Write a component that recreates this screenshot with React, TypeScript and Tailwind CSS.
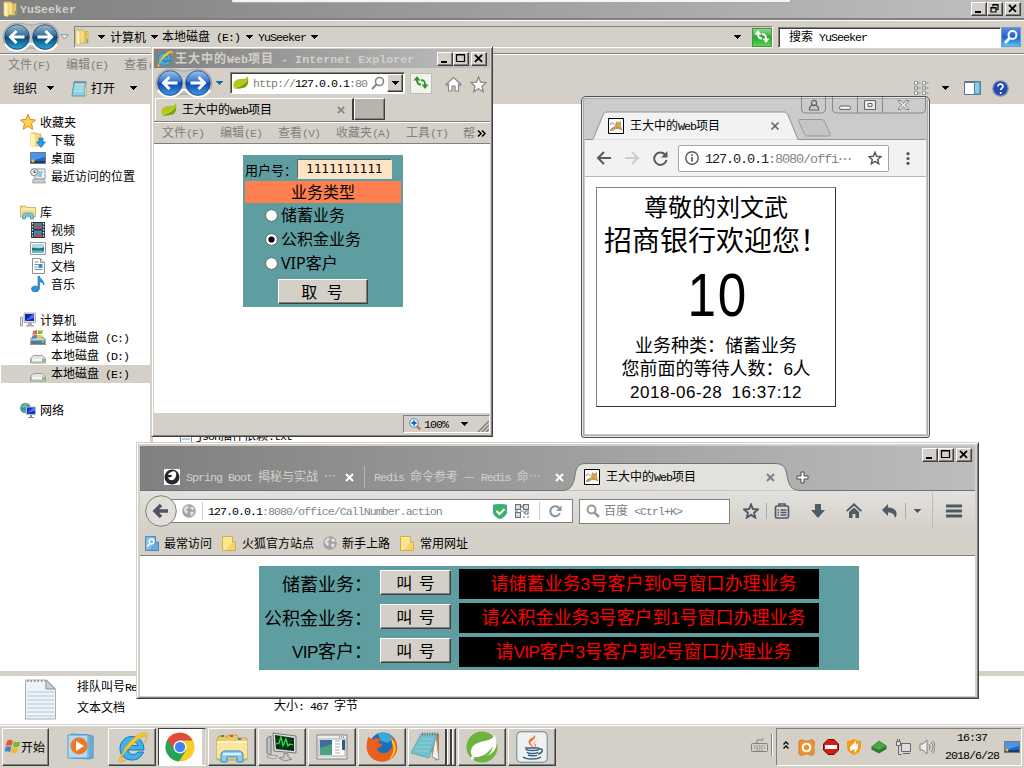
import React from "react";

type IconProps = { className?: string };

/* Text whose Latin letters take half the width of a Chinese character. */
function T({ children, className = "", variant = "song" }: { children: string; className?: string; variant?: "song" | "bold" | "hei" }) {
  const latin =
    variant === "hei"
      ? "font-['Liberation_Sans'] text-[0.95em] tracking-[-0.03em]"
      : variant === "bold"
        ? "font-['Liberation_Mono'] text-[0.96em] tracking-[0.009em]"
        : "font-['Liberation_Mono'] text-[0.97em] tracking-[-0.0845em]";
  const parts = children.split(/([\x20-\x7e]+)/).filter(Boolean);
  return (
    <span className={`shrink-0 whitespace-pre leading-none ${variant === "bold" ? "font-bold tracking-[1px]" : ""} ${className}`}>
      {parts.map((p, i) => (/^[\x20-\x7e]/.test(p) ? <span key={i} className={latin}>{p}</span> : p))}
    </span>
  );
}

const raised = "border border-t-white border-l-white border-r-[#404040] border-b-[#404040] shadow-[inset_-1px_-1px_0_#808080]";
const sunken = "border border-t-[#808080] border-l-[#808080] border-r-white border-b-white";

const Caret = ({ className = "" }: IconProps) => (
  <svg className={`h-[4px] w-[7px] shrink-0 ${className}`} viewBox="0 0 7 4" shapeRendering="crispEdges"><path d="M0 0h7L3.5 4z" fill="currentColor" /></svg>
);

function WinButton({ kind, className = "" }: { kind: "min" | "max" | "restore" | "close"; className?: string }) {
  return (
    <span className={`flex h-[14px] w-[16px] shrink-0 bg-[#d4d0c8] ${raised} ${className}`}>
      <svg className="h-[12px] w-[14px]" viewBox="0 0 14 12" fill="none" stroke="#000">
        {kind === "min" && <path d="M3 9h6" strokeWidth="2" />}
        {kind === "max" && <path d="M2.5 1.5h8v7h-8zM2 2h9" strokeWidth="1.2" />}
        {kind === "restore" && <path d="M5 3.5V1.5h5v5H8M3 4.5h5v4.5H3zM3 5h5M5 1.8h5" strokeWidth="1.2" />}
        {kind === "close" && <path d="M3 1.8l7 7M10 1.8l-7 7" strokeWidth="1.8" />}
      </svg>
    </span>
  );
}

function NavPair({ light }: { light?: boolean }) {
  const id = light ? "navIe" : "navEx";
  return (
    <svg className="h-[30px] w-[58px] shrink-0" viewBox="0 0 58 30">
      <defs>
        <linearGradient id={id} x1="0" y1="0" x2="0" y2="1">
          <stop offset="0" stopColor={light ? "#9cc3ec" : "#9db9cc"} />
          <stop offset=".42" stopColor={light ? "#3c78cf" : "#3a749c"} />
          <stop offset=".52" stopColor={light ? "#1046ad" : "#0c4674"} />
          <stop offset="1" stopColor={light ? "#3f9cf0" : "#27a9dc"} />
        </linearGradient>
      </defs>
      <path d="M15 1C22 1 24 3 29 3S36 1 43 1a14 14 0 0 1 0 28c-7 0-9-3-14-3s-7 3-14 3A14 14 0 0 1 15 1z" fill="#c3c4c6" stroke="#98999a" strokeWidth=".8" />
      <path d="M3 22a14 14 0 0 0 24 0 6 6 0 0 1 4 0 14 14 0 0 0 24 0" fill="none" stroke="#fff" strokeWidth="2" />
      <circle cx="15" cy="15" r="12.3" fill={`url(#${id})`} stroke="#1a3f66" strokeWidth=".8" />
      <circle cx="43" cy="15" r="12.3" fill={`url(#${id})`} stroke="#1a3f66" strokeWidth=".8" />
      <path d="M22.5 15H9M14.5 9L8.5 15l6 6M35.500 15H49M43.500 9l6 6-6 6" fill="none" stroke="#fff" strokeWidth="3" />
    </svg>
  );
}

const Folder = ({ className = "" }: IconProps) => (
  <svg className={`h-4 w-4 shrink-0 ${className}`} viewBox="0 0 16 16">
    <path d="M1 1h7l1 1.500h4V14H1z" fill="#f5dc86" stroke="#d1aa45" strokeWidth=".8" />
    <path d="M1 1l4 1.500V16L1 14.500z" fill="#fff1b5" stroke="#d9b654" strokeWidth=".6" />
    <path d="M9 3h3v11H9z" fill="#e5bd55" /><path d="M12.500 10v4" stroke="#45a5d4" />
  </svg>
);

const Leaf = () => (
  <svg className="h-4 w-4 shrink-0" viewBox="0 0 16 16">
    <path d="M1 13C-1 8 2 4 8 4c4 0 6-1 7-3 1 6-1 11-6 12-3 .8-6 .8-8 0z" fill="#b6c51c" />
    <path d="M1 13c3-1 9-2 14-9 1 6-2 9-6 9-3 .8-6 .8-8 0z" fill="#73a70e" />
    <path d="M1 13c5-2 10-3 13-8" stroke="#e4e76e" strokeWidth=".7" fill="none" />
  </svg>
);

const IELogo = ({ className = "" }: IconProps) => (
  <svg className={`shrink-0 ${className}`} viewBox="0 0 32 32">
    <path d="M28 19H12c.5 5 7 6 10 2h5.500C25 27 21 29 16 29 8.500 29 4 24 4 17.500S9 5.500 16 5.500s12 5 12 13.500zM12 14.500h10c-.5-4.500-9-5-10 0z" fill="#3eb2ea" stroke="#1472bd" strokeWidth="1" />
    <path d="M6 23C0 32 3 33 10 29c-8 2-4-6 5-14C23 7 29 3 30 6c.5 1.300-.3 4-1.500 6C33 5 32 1 27 2c-7 1-17 11-21 21z" fill="#f8c72c" stroke="#d99b12" strokeWidth=".5" />
  </svg>
);

const Globe = () => (
  <svg className="h-[14px] w-[14px] shrink-0" viewBox="0 0 14 14">
    <circle cx="7" cy="7" r="6.800" fill="#a2a2a2" />
    <path d="M2 4l3-2.500 2 1-1 2-2 1 2 2-1 3-2-2-1.500-2zM8 3l3-.5 1.500 3-2 .5-2-1zM8 8l3-.5 1 1.500-2 3-1.500-1z" fill="#e0ded9" />
  </svg>
);

const TomcatIcon = () => (
  <svg className="h-4 w-4 shrink-0" viewBox="0 0 16 16">
    <path d="M.5.5h15v15H.5z" fill="#fff" stroke="#000" strokeWidth="1" />
    <path d="M2 12.500c2-1 3-3 5.500-4.500l.8-4.500 1.700 1.500 2.500-1.500v4l1.300 4.500-2.300-1-1.500-1-3 1-2 1.500z" fill="#d5a64a" stroke="#876328" strokeWidth=".4" />
    <path d="M2.500 7c0-3 2.500-3 4 0" fill="none" stroke="#888" /><path d="M2.500 11.500l3-2M9 9.500l1.500 1.500" stroke="#555" strokeWidth=".7" />
  </svg>
);

function Arrows({ fill }: { fill: string }) {
  return (
    <svg className="h-[16px] w-[18px]" viewBox="0 0 18 16">
      <path d="M9 9.500C5.800 9.500 5 8 5 5M9 5c3.200 0 4 1.500 4 5" fill="none" stroke={fill} strokeWidth="2" />
      <path d="M5 1L1.500 5.500h7zM13 14l-3.500-4.500h7z" fill={fill} />
    </svg>
  );
}

/* ---------- Sidebar ---------- */
function SideIcon({ name }: { name: string }) {
  return (
    <svg className="h-4 w-4 shrink-0" viewBox="0 0 16 16">
      {name === "star" && <path d="M8 .5l2.200 5 5.300.5-4 3.600 1.200 5.600L8 12.300l-4.700 2.900 1.200-5.600L.5 6l5.300-.5z" fill="#ffd24d" stroke="#df7d22" />}
      {name === "download" && (<><path d="M1 1h6l1 1h3v12H1z" fill="#f3d87f" stroke="#cfa84a" strokeWidth=".7" /><path d="M1 1l4 1.500V15l-4-1z" fill="#fff0b3" /><path d="M9 6h4v4h2.500L11 15.500 6.500 10H9z" fill="#289ae4" stroke="#146bb2" strokeWidth=".7" /></>)}
      {name === "desktop" && (<><path d="M.5 2.500h15v11H.5z" fill="#2364c9" stroke="#777" /><path d="M1 3h14v4L1 11z" fill="#4b94e6" /><path d="M1 11h14v2H1z" fill="#173c68" /><circle cx="3" cy="11" r="1.500" fill="#f5c52a" /></>)}
      {name === "recent" && (<><path d="M5 1h10v10H5z" fill="#eef3f7" stroke="#8796a3" /><path d="M3 11h11l1.500 4h-13z" fill="#ccc" stroke="#888" strokeWidth=".6" /><circle cx="4.200" cy="4.200" r="3.600" fill="#e4e9ed" stroke="#888" /><path d="M4.200 2v2.500H6" stroke="#456" fill="none" /><path d="M8 4h5M8 6h4M7 8h5" stroke="#4b9bca" /></>)}
      {name === "library" && (<><path d="M.5 2h5l1 1.500h9V13H.5z" fill="#f6df8b" stroke="#cba64b" strokeWidth=".8" /><path d="M1 5h14" stroke="#fff6c7" /><path d="M2.500 15v-3c0-2 1-3 3-3h5c2 0 3 1 3 3v3h-3v-3h-5v3z" fill="#7cc8ef" stroke="#3989b8" strokeWidth=".7" /></>)}
      {name === "video" && (<><path d="M1 0h14v16H1z" fill="#263c3f" /><path d="M4 1h8v6H4zM4 8.500h8V15H4z" fill="#3585ce" /><path d="M4 1l4 3 4-3v1.500L9.500 5l2.500 2H4l3-2-3-2.500zM4 15l3-4 2 2 3-3v5z" fill="#b64c34" /><path d="M2.500 1v14M13.500 1v14" stroke="#dfeeee" strokeWidth="1.200" strokeDasharray="1.500 1.500" /></>)}
      {name === "image" && (<><path d="M.5 2.500h15v12H.5z" fill="#fff" stroke="#929aa0" /><path d="M2 4h12v9H2z" fill="#a8daf0" /><path d="M2 8c4-1 6 2 12-1v4H2z" fill="#247a54" /><path d="M2 10.500h12V13H2z" fill="#64b8dd" /></>)}
      {name === "doc" && (<><path d="M2.500.5h8l4 4v11h-12z" fill="#fff" stroke="#8b9297" /><path d="M10.500.5v4h4" fill="#ddd" stroke="#8b9297" /><path d="M4.500 4h4M4.500 6.500h4M4.500 9h3M4.500 11.500h8" stroke="#6c91ae" /><path d="M8.500 6h4v4h-4z" fill="#3b87c3" /></>)}
      {name === "music" && <path d="M8 0h1.500c0 3 5 4 4.500 9-1-3-3-3-4.500-3v6c0 5-8 5-8 1 0-3 4-4 6.500-2z" fill="#2b93dc" stroke="#1b6cad" strokeWidth=".6" />}
      {name === "computer" && (<><path d="M4 1h11.500v9.500H4z" fill="#dadbdd" stroke="#999" strokeWidth=".7" /><path d="M5 2h9v7H5z" fill="#1722b8" /><path d="M5 9l8-7h1v4z" fill="#466ee7" /><path d="M8 11h4v2h2v1.500H6V13h2z" fill="#aaa" /><path d="M.5 5h2v9h-2z" fill="#ddd" stroke="#888" strokeWidth=".7" /></>)}
      {name === "windrive" && (<><path d="M0 10l2-3h11l3 3v4.500H0z" fill="#c4ccd0" stroke="#66757e" strokeWidth=".7" /><path d="M1 10.500h14V14H1z" fill="#527d8c" /><path d="M12 11h2v2h-2z" fill="#47e14a" /><path d="M3 1l4-1v4L2.500 5z" fill="#ef6834" /><path d="M8 0c1 1 3 1 5 0l-1 4H7.500z" fill="#7dbc3a" /><path d="M2.500 5.500L7 4.500v3.500l-5 1z" fill="#438ccc" /><path d="M7.500 5H12l-1 3H7z" fill="#f6c52d" /></>)}
      {name === "drive" && (<><path d="M.5 10.500l3-3h9l3 3v4.500H.5z" fill="#e5e5e5" stroke="#888" strokeWidth=".8" /><path d="M1 10.500h14v4H1z" fill="#b4b4b4" /><path d="M2 10.500h10v3H2z" fill="#f6f6f6" /><path d="M12.500 11h1.500v2.500h-1.500z" fill="#4bdc48" /></>)}
      {name === "network" && (<><circle cx="5.500" cy="6" r="5.300" fill="#318bd1" /><path d="M1 5l4-4 3 1-2 3-3 1zM3 8l3 1-1 2-2-1z" fill="#77bf4b" /><path d="M6.500 5h9v7.500h-9z" fill="#1930c0" stroke="#b5c4d3" /><path d="M7 11l7-5.500h1v3z" fill="#5284ec" /><path d="M10 13h2v2h2v1H8v-1h2z" fill="#888" /></>)}
    </svg>
  );
}

type Row = { label: string; icon: string; root?: boolean; selected?: boolean; gap?: boolean };
const rows: Row[] = [
  { label: "收藏夹", icon: "star", root: true },
  { label: "下载", icon: "download" },
  { label: "桌面", icon: "desktop" },
  { label: "最近访问的位置", icon: "recent" },
  { label: "库", icon: "library", root: true, gap: true },
  { label: "视频", icon: "video" },
  { label: "图片", icon: "image" },
  { label: "文档", icon: "doc" },
  { label: "音乐", icon: "music" },
  { label: "计算机", icon: "computer", root: true, gap: true },
  { label: "本地磁盘 (C:)", icon: "windrive" },
  { label: "本地磁盘 (D:)", icon: "drive" },
  { label: "本地磁盘 (E:)", icon: "drive", selected: true },
  { label: "网络", icon: "network", root: true, gap: true },
];

function ExplorerWindow() {
  return (
    <div className="flex h-[725px] w-full flex-col bg-white">
      <div className="flex h-[18px] items-center bg-linear-to-r from-[#808080] to-[#c0c0c0] pl-[3px] pr-[3px]">
        <Folder />
        <T variant="bold" className="ml-px text-[#d4d0c8]">YuSeeker</T>
        <WinButton kind="min" className="ml-auto" />
        <WinButton kind="restore" />
        <WinButton kind="close" className="ml-[2px]" />
      </div>
      <div className="flex h-[37px] items-center border-b border-white border-t-2 border-t-[#808080] bg-[#d4d0c8] pl-[2px] shadow-[inset_0_1px_0_#fff,inset_0_-1px_0_#808080]">
        <NavPair />
        <svg className="h-[6px] w-[9px]" viewBox="0 0 9 6"><path d="M.7.700h7.600L4.500 5z" fill="#eee" stroke="#8a95a0" /></svg>
        <div className={`ml-[5px] flex h-[22px] w-[699px] items-center ${sunken}`}>
          <Folder />
          <Caret className="ml-[7px]" />
          <T className="ml-[5px]">计算机</T>
          <Caret className="ml-[5px]" />
          <T className="ml-[4px]">本地磁盘 (E:)</T>
          <Caret className="ml-[6px]" />
          <T className="ml-[5px]">YuSeeker</T>
          <Caret className="ml-[5px]" />
          <Caret className="ml-auto" />
          <span className="ml-[11px] flex h-[19px] w-[20px] items-center justify-center border border-[#3f9b3f] bg-linear-to-b from-[#8ed58a] via-[#2ca52e] to-[#55d94f]"><Arrows fill="#fff" /></span>
        </div>
        <div className={`ml-[5px] flex h-[21px] w-[223px] items-center bg-white pl-[10px] shadow-[inset_1px_1px_0_#404040] ${sunken}`}><T>搜索 YuSeeker</T></div>
        <span className="flex h-[20px] w-[20px] items-center justify-center border border-[#7a9ac0] bg-linear-to-b from-[#5a8ae0] via-[#215fd0] to-[#52c4f5]">
          <svg className="h-4 w-4" viewBox="0 0 16 16" fill="none" stroke="#fff"><circle cx="9.500" cy="6" r="4" strokeWidth="2" /><path d="M6.500 9L2 14" strokeWidth="2.800" /></svg>
        </span>
      </div>
      <div className="flex h-[19px] items-center gap-[16px] bg-[#d4d0c8] pl-[8px] text-[#808080]">
        <T>文件(F)</T><T>编辑(E)</T><T>查看(V)</T>
      </div>
      <div className="flex h-[30px] items-center bg-[#d4d0c8] pb-[2px] pl-[13px] pr-[15px]">
        <T>组织</T><Caret className="ml-[10px]" />
        <svg className="ml-[17px] h-[17px] w-[17px]" viewBox="0 0 17 17"><path d="M3 2h12l-1 14H1z" fill="#8fd1df" stroke="#5c97aa" /><path d="M14 3l2 12-2 1z" fill="#eee3bd" stroke="#998" strokeWidth=".5" /><path d="M4 5h9M4 8h8M3 11h9" stroke="#c5edf1" /><path d="M4 1v2M6 1v2M8 1v2M10 1v2M12 1v2M14 1v2" stroke="#666" strokeWidth=".8" /></svg>
        <T className="ml-[3px]">打开</T><Caret className="ml-[15px]" />
        <svg className="ml-auto h-[14px] w-[16px]" viewBox="0 0 16 14" fill="#fff" stroke="#72808c" strokeWidth=".8"><path d="M1.500.500h3v3h-3zM1.500 5.500h3v3h-3zM1.500 10.500h3v3h-3zM9.500.500h3v3h-3zM9.500 5.500h3v3h-3zM9.500 10.500h3v3h-3zM5 2h2.500M5 7h2.500M5 12h2.500M13 2h2.500M13 7h2.500M13 12h2.500" /><path d="M2.500 6.500h1v1h-1zM10.500 6.500h1v1h-1z" fill="#c22" stroke="none" /></svg>
        <Caret className="ml-[13px]" />
        <svg className="ml-[15px] h-[14px] w-[17px]" viewBox="0 0 17 14"><path d="M.5.500h16v13H.5z" fill="#fff" stroke="#5b7490" /><path d="M10.500 1h5.500v12h-5.500z" fill="#86cce5" stroke="#4e88a8" /><path d="M1 1.500h9" stroke="#557ba2" /></svg>
        <svg className="ml-[11px] h-[17px] w-[17px]" viewBox="0 0 17 17"><circle cx="8.500" cy="8.500" r="7.700" fill="#2448b5" stroke="#8b94aa" strokeWidth="1.300" /><path d="M5.800 6.500C6 3 11.500 3.500 11 6.700c-.2 1.500-2.300 1.700-2.300 3.300M8.700 12v2" stroke="#fff" strokeWidth="1.700" fill="none" /></svg>
      </div>
      <div className="flex h-[567px]">
        <div className="w-[150px] pt-[9px]">
          {rows.map((r) => (
            <div key={r.label} className={`ml-px flex h-[18px] items-center ${r.root ? "gap-[4px] pl-[19px]" : "gap-[5px] pl-[29px]"} ${r.gap ? "mt-[18px]" : ""} ${r.selected ? "bg-[#d4d0c8]" : ""}`}>
              <SideIcon name={r.icon} /><T>{r.label}</T>
            </div>
          ))}
        </div>
        <div className="w-[3px] bg-[#d4d0c8]" />
        <div className="flex items-start gap-[4px] pl-[27px] pt-[325px]">
          <svg className="h-[14px] w-[12px]" viewBox="0 0 12 14"><path d="M.5.500h11v13H.5z" fill="#f8fbff" stroke="#888" /><path d="M2 4h8M2 7h8M2 10h8" stroke="#79aac7" /></svg>
          <T>json插件依赖.txt</T>
        </div>
      </div>
      <div className="h-[5px] shrink-0 bg-[#d4d0c8]" />
      <div className="flex h-[49px] items-start pl-[24px] pt-[3px]">
        <svg className="h-[42px] w-[33px] shrink-0" viewBox="0 0 33 42"><path d="M1.500 1h21l9 9v30h-30z" fill="#eff3f7" stroke="#a8adb3" /><path d="M22 1v9h9z" fill="#ccd1d7" stroke="#888f97" /><path d="M3 13h27M3 17h27M3 21h27M3 25h27M3 29h27M3 33h27M3 37h27" stroke="#a9cbe2" /><path d="M3 2h18" stroke="#8a9098" strokeWidth="2" strokeDasharray="1.500 2" /></svg>
        <div className="ml-[20px] flex w-[85px] flex-col gap-[7px] pt-px"><T>排队叫号Redis.txt</T><T>文本文档</T></div>
        <T className="ml-[112px] mt-[20px]">大小: 467 字节</T>
      </div>
    </div>
  );
}

/* ---------- Internet Explorer ---------- */
function Radio({ label, checked }: { label: string; checked?: boolean }) {
  return (
    <div className="flex h-[24px] items-center gap-[3px] pl-[20px] text-[16px]">
      <svg className="h-[13px] w-[13px]" viewBox="0 0 13 13"><circle cx="6.500" cy="6.500" r="5.900" fill="#fff" stroke="#5c6263" />{checked && <circle cx="6.500" cy="6.500" r="3.100" fill="#000" />}</svg>
      <span className="whitespace-pre font-['Noto_Sans','Noto_Sans_CJK_SC',sans-serif] leading-none">{label}</span>
    </div>
  );
}

function IEWindow() {
  return (
    <section className="absolute left-[151px] top-[46px] flex h-[391px] w-[342px] flex-col border border-b-[#404040] border-l-[#d4d0c8] border-r-[#404040] border-t-[#d4d0c8] bg-[#d4d0c8] px-[2px] pb-[2px] pt-[2px] shadow-[inset_1px_1px_0_#fff,inset_-1px_-1px_0_#808080]">
      <div className="flex h-[19px] items-center bg-linear-to-r from-[#808080] to-[#c0c0c0] pl-[2px] pr-[3px]">
        <IELogo className="h-[17px] w-[17px]" />
        <T variant="bold" className="ml-[2px] text-[#d4d0c8]">王大中的Web项目 - Internet Explorer</T>
        <WinButton kind="min" className="ml-auto" /><WinButton kind="max" /><WinButton kind="close" className="ml-[2px]" />
      </div>
      <div className="flex h-[30px] items-center pl-px">
        <NavPair light />
        <Caret className="ml-[3px] scale-125 text-[#1c69ad]" />
        <div className={`ml-[7px] flex h-[22px] w-[175px] items-center bg-white pl-[2px] pr-px shadow-[inset_1px_1px_0_#404040] ${sunken}`}>
          <Leaf />
          <span className="ml-[4px] flex text-[#808080]"><T>http://</T><T className="text-black">127.0.0.1</T><T>:80</T></span>
          <svg className="ml-auto h-[14px] w-[14px]" viewBox="0 0 14 14" fill="none" stroke="#858585"><circle cx="8.500" cy="5.500" r="4" strokeWidth="1.600" /><path d="M5.500 8.500L1 13" strokeWidth="2" /></svg>
          <span className={`ml-[2px] flex h-[18px] w-[16px] items-center justify-center bg-[#d4d0c8] ${raised}`}><Caret /></span>
        </div>
        <span className="ml-[5px] flex h-[21px] w-[22px] items-center justify-center border border-[#c1bdb5] bg-[#f1f4ed]"><Arrows fill="#2c962e" /></span>
        <svg className="ml-[13px] mt-[2px] h-[17px] w-[17px]" viewBox="0 0 17 17" fill="#fff" stroke="#858585" strokeWidth="1.200"><path d="M1 8.500l7.500-7 7.500 7-1.500 1-1-1V15h-3.500v-5H7v5H3.500V8.500l-1 1z" /></svg>
        <svg className="ml-[8px] mt-[2px] h-[17px] w-[17px]" viewBox="0 0 17 17" fill="#fff" stroke="#858585" strokeWidth="1.200"><path d="M8.500 1l2.100 5.200 5.500.3-4.200 3.700 1.400 5.500-4.800-3-4.800 3 1.400-5.500L.9 6.500l5.500-.3z" /></svg>
      </div>
      <div className="flex h-[24px] items-start border-b border-[#808080]">
        <div className="ml-px flex h-[22px] w-[199px] items-center border-l border-r-2 border-t border-l-white border-r-[#404040] border-t-white pl-[5px] pr-[7px]">
          <Leaf /><T className="ml-[5px]">王大中的Web项目</T>
          <svg className="ml-auto h-[8px] w-[8px]" viewBox="0 0 8 8"><path d="M.8.800l6.400 6.400M7.200.800L.8 7.200" stroke="#858585" strokeWidth="1.800" /></svg>
        </div>
        <div className={`h-[22px] w-[31px] bg-[#b8b4ac] ${raised}`} />
      </div>
      <div className="flex h-[22px] items-center border-b border-t border-b-[#808080] border-t-white pl-[8px] text-[#808080]">
        <T>文件(F)</T><T className="ml-[16px]">编辑(E)</T><T className="ml-[16px]">查看(V)</T><T className="ml-[16px]">收藏夹(A)</T><T className="ml-[16px]">工具(T)</T>
        <T className="ml-[15px]">帮</T>
        <svg className="ml-[2px] h-[7px] w-[9px]" viewBox="0 0 9 7" fill="none" stroke="#000" strokeWidth="1.500"><path d="M1 .500l3 3-3 3M5 .500l3 3-3 3" /></svg>
      </div>
      <div className="flex h-[269px] bg-white pl-[89px] pt-[11px]">
        <div className="flex h-[152px] w-[160px] flex-col bg-[#5f9ea0] p-[2px]">
          <div className="flex h-[24px] items-center whitespace-pre text-[13px]">
            <span className="w-[52px] shrink-0 leading-none">用户号：</span>
            <input readOnly value="1111111111" className="h-[20px] w-[95px] border border-b-[#e6e3dc] border-l-[#666] border-r-[#e6e3dc] border-t-[#666] bg-[#ffe4c4] px-0 text-center font-['DejaVu_Sans'] text-[12px] outline-none" />
          </div>
          <div className="flex h-[22px] items-center justify-center bg-[#ff7f50] pb-[2px] text-[16px] leading-none">业务类型</div>
          <Radio label="储蓄业务" /><Radio label="公积金业务" checked /><Radio label="VIP客户" />
          <button className={`ml-[33px] mt-[4px] flex h-[25px] w-[90px] shrink-0 items-center justify-center whitespace-pre bg-[#d4d0c8] pb-[2px] pr-[2px] text-[16px] leading-none [word-spacing:6px] ${raised}`}>取 号</button>
        </div>
      </div>
      <div className="flex flex-1 items-center justify-end pt-px">
        <div className={`flex h-[18px] w-[87px] items-center pl-[5px] ${sunken}`}>
          <svg className="h-3 w-3" viewBox="0 0 12 12"><path d="M8 8l3 3.500" stroke="#ba7842" strokeWidth="2.500" /><circle cx="5" cy="5" r="4.400" fill="#d7efff" stroke="#778ba0" /><path d="M5 2.500v5M2.500 5h5" stroke="#156bd0" strokeWidth="1.800" /></svg>
          <T className="ml-[3px]">100%</T><Caret className="ml-[13px]" />
          <svg className="ml-auto h-3 w-3 self-end" viewBox="0 0 12 12" stroke="#808080" strokeWidth="1.500"><path d="M1 12L12 1M5 12l7-7M9 12l3-3" /></svg>
        </div>
      </div>
    </section>
  );
}

/* ---------- Chrome ---------- */
function ChromeWindow() {
  return (
    <section className="absolute left-[581px] top-[96px] flex h-[342px] w-[349px] flex-col rounded-t-[5px] rounded-b-[3px] border border-[#4e5154] bg-[#cbcbcb] px-[3px] pb-[3px] shadow-[inset_0_0_0_1px_#e7e7e7,inset_0_0_0_2px_#aaa]">
      <div className="relative h-[43px]">
        <svg className="absolute left-0 top-0 h-[43px] w-[341px]" viewBox="0 0 341 43" fill="none">
          <path d="M0 42.500h8L18 18c1-2 2-3 4-3h177c2 0 3 1 4 3l10 24.500h128" fill="#f2f2f2" stroke="#929292" />
          <path d="M215 22.500h21c2 0 3 .5 4 3l5 11c1 2 0 2.500-2 2.500h-20c-2 0-3-.5-4-3l-5-11c-1-2 0-2.500 1-2.500z" fill="#c5c5c5" stroke="#999" />
          <path d="M216.500 0v12q0 4 4 4h16q4 0 4-4V0M247.500 0v12q0 4 4 4h85q4 0 4-4V0M272.500 0v16M297.500 0v16" stroke="#888" />
          <circle cx="229" cy="6" r="2.600" stroke="#666" strokeWidth="1.200" /><path d="M224.500 13v-2q1-3 4.500-3t4.500 3v2z" stroke="#666" strokeWidth="1.200" />
          <rect x="254.500" y="9" width="11" height="3.500" rx="1.500" fill="#eee" stroke="#666" />
          <path d="M279.500 3.500h11v9h-11z" fill="#eee" stroke="#666" /><path d="M283 6.500h4v3h-4z" stroke="#666" />
          <path d="M313 3.500h3l2.500 3 2.500-3h3l-4 4.500 4 4.500h-3l-2.500-3-2.500 3h-3l4-4.500z" fill="#eee" stroke="#777" strokeWidth=".9" />
          <path d="M186.500 25.500l7 7M193.500 25.500l-7 7" stroke="#666" strokeWidth="1.700" />
        </svg>
        <div className="relative flex h-[43px] items-center gap-[6px] pl-[23px] pt-[15px]"><TomcatIcon /><T>王大中的Web项目</T></div>
      </div>
      <div className="flex h-[37px] items-center border-b border-[#b6b6b6] bg-[#f2f2f2] pl-[11px]">
        <svg className="h-[16px] w-[72px]" viewBox="0 0 72 16" fill="none" strokeWidth="2"><path d="M15 8H2M8 2L2 8l6 6" stroke="#5a5a5a" /><path d="M29 8h13M36 2l6 6-6 6" stroke="#ccc" /><path d="M69 4.500A6.200 6.200 0 1 0 70.500 10" stroke="#5a5a5a" /><path d="M71.500 1v6.500H65z" fill="#5a5a5a" /></svg>
        <div className="ml-[10px] flex h-[27px] w-[211px] items-center rounded-[2px] border border-[#a5a5a5] bg-white pl-[6px] pr-[6px] text-[14px]">
          <svg className="h-[14px] w-[14px]" viewBox="0 0 14 14" fill="none" stroke="#5a5a5a" strokeWidth="1.400"><circle cx="7" cy="7" r="6.200" /><path d="M7 6v4.500M7 3.300v1.600" strokeWidth="1.700" /></svg>
          <T className="ml-[6px] text-[#222]">127.0.0.1</T><T className="text-[#858585]">:8080/offi</T><span className="leading-none text-[#666]">⋯</span>
          <svg className="ml-auto h-[14px] w-[14px]" viewBox="0 0 17 17" fill="none" stroke="#5a5a5a" strokeWidth="1.800"><path d="M8.500 1.500l2 4.900 5.300.4-4 3.500 1.200 5.200-4.500-2.800-4.500 2.800 1.200-5.200-4-3.500 5.300-.4z" /></svg>
        </div>
        <svg className="ml-[17px] h-[13px] w-[4px]" viewBox="0 0 4 13" fill="#555"><circle cx="2" cy="1.700" r="1.600" /><circle cx="2" cy="6.500" r="1.600" /><circle cx="2" cy="11.300" r="1.600" /></svg>
      </div>
      <div className="flex-1 bg-white pl-[11px] pt-[10px]">
        <div className="flex h-[220px] w-[240px] flex-col items-center border border-b-[#333] border-l-[#808080] border-r-[#333] border-t-[#808080]">
          <div className="mt-[5px] flex h-[26px] items-center text-[24px] leading-none">尊敬的刘文武</div>
          <div className="mt-[5px] flex h-[30px] items-center whitespace-nowrap text-[28px] leading-none">招商银行欢迎您！</div>
          <div className="mt-[11px] flex h-[60px] scale-x-[0.84] items-center pl-[3px] font-['Liberation_Sans'] text-[61px] leading-none tracking-[2px]">10</div>
          <div className="mt-[7px] flex h-[24px] items-center text-[18px]"><T variant="hei">业务种类：储蓄业务</T></div>
          <div className="flex h-[24px] items-center text-[18px]"><T variant="hei">您前面的等待人数：6人</T></div>
          <div className="flex h-[24px] items-center whitespace-pre font-['Liberation_Sans'] text-[17px] leading-none tracking-[0.540px] [word-spacing:4px]">2018-06-28 16:37:12</div>
        </div>
      </div>
    </section>
  );
}

/* ---------- Firefox ---------- */
const queue = [
  ["储蓄业务：", "请储蓄业务3号客户到0号窗口办理业务"],
  ["公积金业务：", "请公积金业务3号客户到1号窗口办理业务"],
  ["VIP客户：", "请VIP客户3号客户到2号窗口办理业务"],
];

const TabX = ({ className = "" }: IconProps) => (
  <svg className={`h-[9px] w-[9px] shrink-0 ${className}`} viewBox="0 0 9 9"><path d="M1 1l7 7M8 1L1 8" stroke="currentColor" strokeWidth="2" /></svg>
);
const Note = () => (
  <svg className="h-[15px] w-[14px] shrink-0" viewBox="0 0 14 15"><path d="M.5.500h10v14H.5z" fill="#fae78e" stroke="#d2ad45" /><path d="M10.500 6h3v8.500h-10" fill="#f4d467" stroke="#d2ad45" /></svg>
);

function FirefoxWindow() {
  return (
    <section className="absolute left-[136px] top-[442px] flex h-[257px] w-[843px] flex-col border border-b-[#404040] border-l-[#d4d0c8] border-r-[#404040] border-t-[#d4d0c8] bg-[#d4d0c8] px-[3px] pb-[2px] pt-[3px] shadow-[inset_1px_1px_0_#fff,inset_-1px_-1px_0_#808080]">
      <div className="relative h-[45px] shrink-0 bg-linear-to-r from-[#808080] to-[#bdbdbd]">
        <svg className="absolute left-0 top-0 h-[45px] w-[835px]" viewBox="0 0 835 45"><path d="M0 44.500h421c10 0 12-5 14-15 1-8 3-12 11-12h189c8 0 11 4 12 12 2 10 4 15 14 15h174" fill="#e3e1dc" stroke="#6c7379" /></svg>
        <div className="relative flex h-[45px] items-center pl-[24px] pr-[3px] pt-[17px] text-[#d4d0c8]">
          <svg className="h-4 w-4 shrink-0" viewBox="0 0 16 16"><path d="M0 0h16v16H0z" fill="#fff" /><circle cx="8" cy="8" r="7.500" fill="#24272d" /><path d="M7 3c4-2 6 1 5 4-1 5-7 6-8 1 2 1 4 0 4-2-2 0-4 0-4-1z" fill="#fff" /></svg>
          <T className="ml-[6px] w-[150px]">Spring Boot 揭秘与实战 ⋯</T>
          <TabX className="ml-[9px] text-white" />
          <span className="ml-[10px] h-[22px] w-px bg-[#b7b7b7]" />
          <T className="ml-[9px] w-[168px]">Redis 命令参考 — Redis 命⋯</T>
          <TabX className="ml-[13px] text-white" />
          <span className="ml-[20px] flex"><TomcatIcon /></span>
          <T className="ml-[6px] text-black">王大中的Web项目</T>
          <TabX className="ml-[70px] text-[#78828b]" />
          <svg className="ml-[21px] h-[13px] w-[13px]" viewBox="0 0 13 13"><path d="M5 1h3v4h4v3H8v4H5V8H1V5h4z" fill="#fff" stroke="#4b4b4b" /></svg>
          <span className="mb-auto ml-auto -mt-[15px] flex"><WinButton kind="min" /><WinButton kind="max" /><WinButton kind="close" className="ml-[2px]" /></span>
        </div>
      </div>
      <div className="flex h-[40px] shrink-0 items-center bg-linear-to-b from-[#e3e1dc] to-[#d4d0c8] pl-[5px] text-[#4d5b68]">
        <svg className="z-10 h-[32px] w-[32px] shrink-0" viewBox="0 0 32 32"><circle cx="16" cy="16" r="15.300" fill="#e2dfda" stroke="#808080" /><path d="M16 10l-6 6 6 6M11 16h12" fill="none" stroke="#4b5662" strokeWidth="3.500" /></svg>
        <div className="-ml-[6px] flex h-[24px] w-[402px] items-center border border-[#808080] bg-white pl-[10px] pr-[10px]">
          <Globe /><span className="ml-[6px] h-[18px] w-px bg-[#ccc]" />
          <T className="ml-[5px] text-black">127.0.0.1</T><T className="text-[#858585]">:8080/office/CallNumber.action</T>
          <svg className="ml-auto h-[15px] w-[14px]" viewBox="0 0 14 15"><path d="M.5 1C4 1 5 0 7 0s3 1 6.500 1v7c0 4-4 5-6.500 7C4 13 .5 12 .5 8z" fill="#3eb35b" stroke="#31a5bf" /><path d="M3.500 7l3 3 5-5" stroke="#fff" strokeWidth="2" fill="none" /></svg>
          <svg className="ml-[8px] h-[14px] w-[14px]" viewBox="0 0 14 14" fill="none" stroke="#68727c" strokeWidth="1.200"><path d="M.6.6h4.800v4.800H.6zM8.600.6h4.800v4.800H8.600zM.6 8.600h4.800v4.800H.6zM2.500 3h1M10.500 3h1M2.500 11h1M8 8h2v2h3V8M8 13h2M12 13h2M7 1v3M0 7h3M5 7h3M10 7h4" /></svg>
          <span className="ml-[10px] h-[18px] w-px bg-[#ccc]" />
          <svg className="ml-[9px] h-[13px] w-[13px]" viewBox="0 0 13 13"><path d="M10.500 3.500A5 5 0 1 0 11 8" fill="none" stroke="#8794a0" strokeWidth="2" /><path d="M12.500.500v5.500H7z" fill="#8794a0" /></svg>
        </div>
        <div className="ml-[6px] flex h-[25px] w-[151px] items-center border border-[#808080] bg-white pl-[6px] text-[#808080]">
          <svg className="h-[14px] w-[14px]" viewBox="0 0 14 14" fill="none" stroke="#999"><circle cx="5.500" cy="5.500" r="4" strokeWidth="2" /><path d="M8.500 8.500L13 13" strokeWidth="2.600" /></svg>
          <T className="ml-[4px]">{"百度 <Ctrl+K>"}</T>
        </div>
        <svg className="ml-[13px] h-4 w-4" viewBox="0 0 17 17" fill="none" stroke="currentColor" strokeWidth="2"><path d="M8.500 1.500l2 4.900 5.300.4-4 3.500 1.200 5.200-4.500-2.800-4.500 2.800 1.200-5.200-4-3.500 5.300-.4z" /></svg>
        <span className="ml-[7px] h-[16px] w-px bg-[#aaa]" />
        <svg className="ml-[7px] h-4 w-4" viewBox="0 0 16 16" fill="none" stroke="currentColor" strokeWidth="1.700"><rect x="1.500" y="3" width="13" height="12" rx="1.500" /><path d="M5 3V1h6v2M3.500 7h1.500M6.500 7h6M3.500 9.500h1.500M6.500 9.500h6M3.500 12h1.500M6.500 12h6" /></svg>
        <svg className="ml-[20px] h-4 w-4" viewBox="0 0 16 16" fill="currentColor"><path d="M5 1h6v6h4l-7 8-7-8h4z" /></svg>
        <svg className="ml-[20px] h-4 w-4" viewBox="0 0 16 16" fill="currentColor"><path d="M8 0l8 7.500-1.300 1.300L8 2.800 1.300 8.800 0 7.500z" /><path d="M8 4.500l5 4.500v6h-3.500v-4h-3v4H3V9z" /></svg>
        <svg className="ml-[20px] h-4 w-4" viewBox="0 0 16 16" fill="currentColor"><path d="M6 1v3.500c7-.3 11 5 7 10.500-.5-4-3-5.500-7-5.500V13L0 7z" /></svg>
        <span className="ml-[7px] h-[16px] w-px bg-[#aaa]" /><Caret className="ml-[8px]" />
        <span className="ml-[11px] h-[36px] w-px bg-[#bbb]" />
        <svg className="ml-[13px] h-[14px] w-4" viewBox="0 0 16 14" stroke="currentColor" strokeWidth="3"><path d="M0 2h16M0 7h16M0 12h16" /></svg>
      </div>
      <div className="flex h-[25px] shrink-0 items-center border-b border-[#808080] pl-[5px]">
        <svg className="h-[15px] w-[14px]" viewBox="0 0 14 15"><path d="M.5.500h10v14H.5z" fill="#8abfe4" stroke="#4689b7" /><path d="M10.500 6h3v8.500h-10" fill="#69abd6" stroke="#4689b7" /><circle cx="6.500" cy="5.500" r="2.400" fill="none" stroke="#fff" strokeWidth="1.300" /><path d="M5 7.500L2 10.500" stroke="#fff" strokeWidth="1.600" /></svg>
        <T className="ml-[5px]">最常访问</T>
        <span className="ml-[10px]"><Note /></span><T className="ml-[6px]">火狐官方站点</T>
        <span className="ml-[9px]"><Globe /></span><T className="ml-[5px]">新手上路</T>
        <span className="ml-[10px]"><Note /></span><T className="ml-[6px]">常用网址</T>
      </div>
      <div className="flex-1 bg-white pl-[119px] pt-[10px]">
        <div className="flex h-[104px] w-[600px] flex-col gap-[4px] bg-[#5f9ea0] pt-[3px] text-[18px]">
          {queue.map(([label, msg]) => (
            <div key={label} className="flex h-[30px] items-center">
              <T variant="hei" className="mb-[2px] w-[113px] text-right">{label}</T>
              <button className={`mb-[3px] ml-[8px] flex h-[25px] w-[71px] items-center justify-center whitespace-pre bg-[#d4d0c8] pb-px text-[16px] leading-none [word-spacing:3px] ${raised}`}>叫 号</button>
              <div className="ml-[8px] flex h-[30px] w-[360px] items-center justify-center bg-black pb-px pl-[9px] text-[#ff0000]"><T variant="hei">{msg}</T></div>
            </div>
          ))}
        </div>
      </div>
    </section>
  );
}

/* ---------- Taskbar ---------- */
function TaskIcon({ name }: { name: string }) {
  if (name === "ie") return <IELogo className="h-8 w-8" />;
  return (
    <svg className="h-8 w-8 shrink-0" viewBox="0 0 32 32">
      {name === "chrome" && (<><circle cx="16" cy="16" r="14.500" fill="#f7cd26" /><path d="M3.400 8.800A14.500 14.500 0 0 0 15 30.500l7-11-6-3.500z" fill="#25a35a" /><path d="M3.400 8.800A14.500 14.500 0 0 1 28.600 9.500H16l-6 9z" fill="#de4b3d" /><circle cx="16" cy="16" r="6.500" fill="#fff" /><circle cx="16" cy="16" r="5.200" fill="#4285f4" /></>)}
      {name === "folder" && (<><path d="M1 8l2-3h7l1 2 1-3h9l1 3h9v22H1z" fill="#e9ca68" stroke="#ba953b" strokeWidth=".7" /><path d="M1 10h30v17H1z" fill="#fae6a0" /><path d="M5 4h3v2H5z" fill="#26a34c" /><path d="M14 4h3v2h-3z" fill="#d74831" /><path d="M22 7h3v2h-3z" fill="#3181ce" /><path d="M1 11h30" stroke="#fff6ce" strokeWidth="1.500" /><path d="M5 31v-7q0-4 5-4h12q5 0 5 4v7h-6v-5H11v5z" fill="#8dcdf0" stroke="#3689bd" /><path d="M7 23h18" stroke="#d5f0ff" strokeWidth="2" /></>)}
      {name === "monitor" && (<><path d="M1 7l4-2v20l-4-3z" fill="#bfc2c3" stroke="#777" /><path d="M7 2l23 3v17L8 20z" fill="#d8dddd" stroke="#777" /><path d="M9 4l19 3v13L10 18z" fill="#072b13" /><path d="M10 8l18 2M10 13l18 1M14 5v14M20 6v13" stroke="#156331" strokeWidth=".6" /><path d="M10 13l3-1 2-6 2 9 3-7 2 7 2-2 3 1" fill="none" stroke="#32e253" strokeWidth="1.300" /><path d="M18 22l4 1v3l4 2-7 2-6-3 5-1z" fill="#ccc" stroke="#888" /><path d="M2 24l10 1-4 3-7-2z" fill="#ddd" stroke="#999" /></>)}
      {name === "window" && (<><path d="M1 4h30v24H1z" fill="#edf0f1" stroke="#7c8387" /><path d="M3 8h26v17H3z" fill="#fff" stroke="#aaa" /><path d="M4 9h12v15H4z" fill="#3b6e9c" /><path d="M4 17l12-4v11H4z" fill="#4fa080" /><path d="M19 10h5M19 13h5M19 16h5M19 19h5M19 22h5" stroke="#aaa" /><path d="M26 9h3v10h-3z" fill="#315b80" /><path d="M23 6h6" stroke="#555" strokeDasharray="1 1" /></>)}
      {name === "firefox" && (<><circle cx="17" cy="15" r="13.500" fill="#1d6db8" /><path d="M12 3c5-3 13 0 15 4l-5 5-7-2z" fill="#36a9df" /><path d="M2 6c1 0 3 1 4 3 2-2 6-2 9-1l-3 4 4 1c0 4-4 4-5 4 1 6 9 7 13 2 4-4 3-10 0-14 8 4 9 13 5 19C23 33 9 33 3 24-1 18 1 12 2 6z" fill="#e6611d" /><path d="M25 7c7 6 6 17-2 22 4-6 6-12 3-17z" fill="#fac92d" /></>)}
      {name === "notes" && (<><path d="M12 3h17v23l-3 4z" fill="#ad813d" /><path d="M26 3l3 26-7-3z" fill="#efefec" stroke="#999" /><path d="M11 3h16l-8 24L1 22z" fill="#74bfce" stroke="#6fa5b3" /><path d="M11 8h12M9 12h12M7 16h13M5 20h13" stroke="#a5d8e0" strokeWidth=".7" /><path d="M12 3h16" stroke="#777" strokeWidth="3" strokeDasharray="1 1.500" /></>)}
      {name === "spring" && (<><circle cx="16" cy="16" r="15.500" fill="#6db33f" /><path d="M28.500 4c-3 6-8 5-14 7-8 2-12 8-8 15 12 2 22-2 24-12 .5-4-.5-7-2-10z" fill="#fff" /><path d="M7 27c9-1 15-4 20-12-2 10-9 14-20 12z" fill="#6db33f" /><circle cx="6.500" cy="27" r="1.700" fill="#fff" /></>)}
      {name === "java" && (<><rect x=".8" y=".8" width="30.400" height="30.400" rx="4" fill="#f0f0f0" stroke="#62879c" /><path d="M19 4c2 5-7 6-4 9l3 4c-5-3-7-6-4-9 2-1 4-2 5-4zM22 9c-5 2-5 3-3 5 1 1-1 2-2 3 6-2 2-4 1-5 0-1 3-2 4-3z" fill="#e76f24" /><path d="M9 17h14M10 18c0 2 13 2 13 0M11 21c1 2 10 2 11 0M12 24c2 1 8 1 9 0M7 26c4 3 16 2 18 0M23 18c5-1 4 4-1 5" fill="none" stroke="#365f80" strokeWidth="1.500" /></>)}
    </svg>
  );
}

function Taskbar() {
  return (
    <div className="flex h-[43px] w-full items-start border-t border-white bg-[#d4d0c8] pl-[2px] pt-[2px] shadow-[0_-1px_0_#d4d0c8]">
      <div className={`flex h-[38px] w-[47px] items-center pl-[2px] ${raised}`}>
        <svg className="h-[16px] w-[16px] shrink-0" viewBox="0 0 16 16"><path d="M2 2c2-2 4-1 6 0L6.500 7c-2-1-4-1-6 0z" fill="#e55a2b" /><path d="M9 2.500c2 1 4 1 6.500 0L14 7.500c-2 1-4 1-6 0z" fill="#7cb632" /><path d="M.5 8c2-1 4-1 6 0L5 13c-2-1-3-1-5 0z" fill="#3f85ce" /><path d="M7.500 8.500c2 1 4 1 6 0L12 13.500c-2 1-4 1-6 0z" fill="#f4bb20" /></svg>
        <T className="mb-px">开始</T>
      </div>
      <div className="flex h-[38px] w-[59px] items-center justify-center pl-[7px]">
        <svg className="h-[28px] w-[30px]" viewBox="0 0 30 28"><path d="M7 2l19 1v22H7z" fill="#71b4df" stroke="#4b8cb8" /><path d="M4 1l19 1v24l-19-1z" fill="#91c9ed" stroke="#5595bd" /><path d="M1 2h20v23H1z" fill="#b2dbf2" stroke="#5c9ec4" /><circle cx="12" cy="13" r="8.500" fill="#ed7924" /><path d="M9 8v10l8-5z" fill="#fff" /></svg>
      </div>
      <div className="flex gap-[2px]">
        {["ie", "chrome", "folder", "monitor", "window", "firefox", "notes", "spring", "java"].map((n) => (
          <div key={n} className={`flex h-[38px] w-[48px] items-center justify-center ${n === "chrome" ? "border border-b-white border-l-[#404040] border-r-[#ddd] border-t-[#404040] bg-white pr-[4px] shadow-[inset_-3px_0_0_#d4d0c8]" : raised}`}>
            {n === "notes" ? <div className="flex h-full w-full items-center justify-end"><TaskIcon name={n} /><span className="ml-[3px] h-full w-[2px] bg-[#404040]" /><span className="h-full w-[5px] border-l border-r-2 border-l-white border-r-[#404040]" /><span className="h-full w-[3px] border-l border-l-white" /></div> : <TaskIcon name={n} />}
          </div>
        ))}
      </div>
      <svg className="ml-auto mt-[9px] h-[16px] w-[17px] shrink-0" viewBox="0 0 17 16" fill="none" stroke="#808080"><rect x=".5" y="6.500" width="16" height="8" rx="1" /><path d="M3 9h11M3 11h11M5 13h7" strokeDasharray="1.500 1" /><path d="M6 6V3h6V1" /></svg>
      <span className="ml-[3px] mt-[6px] h-[22px] w-[2px] border-l border-r border-l-[#808080] border-r-white" />
      <div className={`ml-[3px] mr-[2px] flex h-[38px] w-[246px] shrink-0 items-center pl-[6px] pr-[1px] ${sunken}`}>
        <svg className="mb-[4px] h-[8px] w-[6px]" viewBox="0 0 6 8" fill="none" stroke="#000" strokeWidth="1.300"><path d="M.5 3.500L3 1l2.500 2.500M.5 7.500L3 5l2.500 2.500" /></svg>
        <svg className="ml-[9px] h-[17px] w-[17px]" viewBox="0 0 17 17"><path d="M2 1q3-1 4 1h5q1-2 4-1 3 2 1 5v5q1 3-1 5-3 1-5-1H7q-2 2-5 1-2-2-1-5V6q-1-3 1-5z" fill="#ef9230" stroke="#d36a14" strokeWidth=".7" /><circle cx="8.500" cy="8.500" r="3.800" fill="none" stroke="#fff" strokeWidth="2" /></svg>
        <svg className="ml-[8px] h-[16px] w-[16px]" viewBox="0 0 16 16"><path d="M5 .500h6L15.500 5v6L11 15.500H5L.5 11V5z" fill="#d41c16" stroke="#650d0d" /><path d="M2 6h12v4H2z" fill="#fff" /></svg>
        <svg className="ml-[8px] h-[16px] w-[14px]" viewBox="0 0 14 16"><path d="M0 2q4 0 7-2 3 2 7 2v6q0 5-7 8-7-3-7-8z" fill="#fa9a12" /><path d="M3 12V8l6-6v4l2-2v5q-2 4-4 5l1-4z" fill="#fff" /></svg>
        <svg className="ml-[10px] h-[14px] w-[16px]" viewBox="0 0 16 14"><path d="M.5 7L8 1l7.500 5v3L8 13.500l-7.500-4z" fill="#2d7b29" /><path d="M.5 7L8 1l7.500 5L8 10.500z" fill="#4ba448" stroke="#267e28" strokeWidth=".5" /></svg>
        <svg className="ml-[8px] h-[16px] w-[16px]" viewBox="0 0 16 16" fill="#ddd" stroke="#686868"><path d="M6.500 4.500h9v8h-9zM8 14.500h7M1.500 2.500h4v4h-4zM2.500 0v2.500M4.500 0v2.500M3.500 6.500v9h3" /></svg>
        <svg className="ml-[8px] h-[16px] w-[16px]" viewBox="0 0 16 16" fill="none" stroke="#808080"><path d="M1 5h3l4-4v14l-4-4H1z" fill="#eee" /><path d="M10 5q2 3 0 6M12 3q4 5 0 10M14 1.500q4 6.500 0 13" /></svg>
        <div className="ml-[9px] flex w-[56px] flex-col items-center gap-[4px] whitespace-pre pb-[2px]"><T>16:37</T><T>2018/6/28</T></div>
        <span className="ml-auto flex"><SideIcon name="desktop" /></span>
      </div>
    </div>
  );
}

export default function App() {
  return (
    <main className="relative h-[768px] w-[1024px] overflow-hidden bg-[#d4d0c8] font-['Noto_Sans_CJK_SC',sans-serif] text-[12px] leading-none text-black">
      <ExplorerWindow />
      <Taskbar />
      <div className="absolute left-[232px] top-0 h-[3px] w-[558px] rounded-b-[2px] border-b border-[#aaa] bg-[#f5f5f5]" />
      <IEWindow />
      <ChromeWindow />
      <FirefoxWindow />
    </main>
  );
}
